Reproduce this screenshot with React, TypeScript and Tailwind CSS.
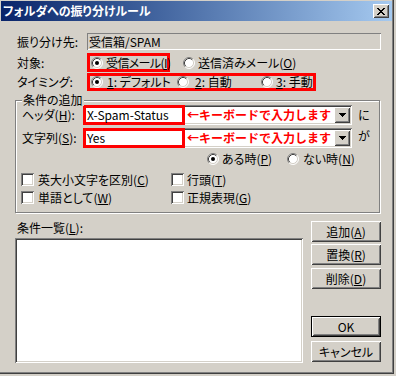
import type { ReactNode } from 'react';

const sunken =
  'shadow-[inset_1px_1px_#808080,inset_-1px_-1px_#fff,inset_2px_2px_#404040,inset_-2px_-2px_#d4d0c8]';
const raised =
  'shadow-[inset_1px_1px_#fff,inset_-1px_-1px_#404040,inset_2px_2px_#d4d0c8,inset_-2px_-2px_#808080]';

function U({ children }: { children: ReactNode }) {
  return <span className="underline underline-offset-1">{children}</span>;
}

function Radio({ on }: { on?: boolean }) {
  return (
    <svg width="12" height="12" viewBox="0 0 12 12" className="shrink-0">
      <circle cx="6" cy="6" r="5" fill="#fff" />
      <path d="M2.11 9.89A5.5 5.5 0 0 1 9.89 2.11" fill="none" stroke="#808080" />
      <path d="M9.89 2.11A5.5 5.5 0 0 1 2.11 9.89" fill="none" stroke="#fff" />
      <path d="M2.82 9.18A4.5 4.5 0 0 1 9.18 2.82" fill="none" stroke="#404040" />
      <path d="M9.18 2.82A4.5 4.5 0 0 1 2.82 9.18" fill="none" stroke="#d4d0c8" />
      {on && <circle cx="6" cy="6" r="2" fill="#000" />}
    </svg>
  );
}

function Check() {
  return <div className={`h-[13px] w-[13px] shrink-0 bg-white ${sunken}`} />;
}

function DropBtn() {
  return (
    <div className={`mr-[2px] flex h-[16px] w-[16px] shrink-0 items-center justify-center bg-[#d4d0c8] ${raised}`}>
      <svg width="7" height="4" viewBox="0 0 7 4" shapeRendering="crispEdges">
        <path d="M0 0h7v1H0zM1 1h5v1H1zM2 2h3v1H2zM3 3h1v1H3z" fill="#000" />
      </svg>
    </div>
  );
}

function Btn({ children, def, className = '' }: { children: ReactNode; def?: boolean; className?: string }) {
  return (
    <div
      className={`flex h-[21px] w-[70px] items-center justify-center bg-[#d4d0c8] ${
        def ? 'border border-black' : ''
      } ${raised} ${className}`}
    >
      {children}
    </div>
  );
}

export default function App() {
  return (
    <div className="h-[376px] w-[396px] bg-[#d4d0c8] font-['Noto_Sans_CJK_JP',sans-serif] text-[12px] leading-[14px] text-black [font-feature-settings:'palt']">
      <div className="h-[374px] w-[394px] pl-px pt-px shadow-[inset_-1px_-1px_#404040,inset_-2px_-2px_#808080]">
        {/* title bar */}
        <div className="flex h-[20px] w-[391px] items-center justify-between bg-linear-to-r from-[#0a246a] to-[#a6caf0] pl-[2px] pr-[3px]">
          <span className="font-bold text-white">フォルダへの振り分けルール</span>
          <div className={`flex h-[14px] w-[16px] items-center justify-center bg-[#d4d0c8] ${raised}`}>
            <svg width="8" height="7" viewBox="0 0 8 7" shapeRendering="crispEdges">
              <path
                d="M0 0h2v1H0zM6 0h2v1H6zM1 1h2v1H1zM5 1h2v1H5zM2 2h4v1H2zM3 3h2v1H3zM2 4h4v1H2zM1 5h2v1H1zM5 5h2v1H5zM0 6h2v1H0zM6 6h2v1H6z"
                fill="#000"
              />
            </svg>
          </div>
        </div>

        {/* destination */}
        <div className="mt-[12px] flex h-[17px] items-center">
          <span className="ml-[16px] w-[70px]">振り分け先:</span>
          <div className="flex h-[17px] w-[294px] items-center pl-[2px] shadow-[inset_1px_1px_#808080,inset_-1px_-1px_#fff]">
            受信箱/SPAM
          </div>
        </div>

        {/* target */}
        <div className="mt-[3px] flex h-[19px] items-center">
          <span className="ml-[16px] w-[70px]">対象:</span>
          <div className="flex h-[19px] w-[83px] items-center whitespace-nowrap border-[3px] border-[#ff0000] pl-px">
            <Radio on />
            <span className="ml-[3px] tracking-[-0.6px]">
              受信メール(<U>I</U>)
            </span>
          </div>
          <div className="ml-[13px]">
            <Radio />
          </div>
          <span className="ml-[3px]">
            送信済みメール(<U>O</U>)
          </span>
        </div>

        {/* timing */}
        <div className="mt-px flex h-[18px] items-center">
          <span className="ml-[16px] w-[70px]">タイミング:</span>
          <div className="flex h-[18px] w-[229px] items-center whitespace-nowrap border-[3px] border-[#ff0000] pl-px">
            <div className="flex w-[86px] items-center">
              <Radio on />
              <span className="ml-[4px]">
                <U>1</U>: デフォルト
              </span>
            </div>
            <div className="flex w-[84px] items-center">
              <Radio />
              <span className="ml-[6px]">
                <U>2</U>: 自動
              </span>
            </div>
            <div className="flex items-center">
              <Radio />
              <span className="ml-[3px]">
                <U>3</U>: 手動
              </span>
            </div>
          </div>
        </div>

        {/* condition group */}
        <div className="relative ml-[14px] mt-[9px] h-[113px] w-[365px] border border-[#808080] shadow-[inset_1px_1px_#fff,1px_1px_#fff]">
          <span className="absolute -top-[7px] left-[6px] bg-[#d4d0c8] px-px leading-[12px]">条件の追加</span>

          <div className="mt-[4px] flex h-[20px] items-center">
            <span className="ml-[6px] w-[61px] leading-[12px]">
              ヘッダ(<U>H</U>):
            </span>
            <div className={`flex h-[20px] w-[269px] items-center bg-white ${sunken}`}>
              <div className="flex h-[20px] w-[102px] shrink-0 items-center border-[3px] border-[#ff0000] bg-white pl-px [font-feature-settings:normal]">
                X-Spam-Status
              </div>
              <span className="ml-[2px] flex-1 whitespace-nowrap font-bold text-[#ff0000] [font-feature-settings:normal]">
                ←キーボードで入力します
              </span>
              <DropBtn />
            </div>
            <span className="ml-[6px]">に</span>
          </div>

          <div className="mt-[3px] flex h-[20px] items-center">
            <span className="ml-[6px] w-[61px]">
              文字列(<U>S</U>):
            </span>
            <div className={`flex h-[20px] w-[269px] items-center bg-white ${sunken}`}>
              <div className="flex h-[20px] w-[102px] shrink-0 items-center border-[3px] border-[#ff0000] bg-white pl-px [font-feature-settings:normal]">
                Yes
              </div>
              <span className="ml-[2px] flex-1 whitespace-nowrap font-bold text-[#ff0000] [font-feature-settings:normal]">
                ←キーボードで入力します
              </span>
              <DropBtn />
            </div>
            <span className="-mt-[5px] ml-[6px]">が</span>
          </div>

          <div className="mt-[5px] flex h-[12px] items-center">
            <div className="ml-[191px] flex w-[80px] items-center">
              <Radio on />
              <span className="ml-[3px]">
                ある時(<U>P</U>)
              </span>
            </div>
            <div className="flex items-center">
              <Radio />
              <span className="ml-[4px]">
                ない時(<U>N</U>)
              </span>
            </div>
          </div>

          <div className="mt-[8px] flex h-[13px] items-center">
            <div className="ml-[5px] flex w-[150px] items-center">
              <Check />
              <span className="ml-[4px]">
                英大小文字を区別(<U>C</U>)
              </span>
            </div>
            <div className="flex items-center">
              <Check />
              <span className="ml-[3px]">
                行頭(<U>T</U>)
              </span>
            </div>
          </div>

          <div className="mt-[5px] flex h-[13px] items-center">
            <div className="ml-[5px] flex w-[150px] items-center">
              <Check />
              <span className="ml-[4px]">
                単語として(<U>W</U>)
              </span>
            </div>
            <div className="flex items-center">
              <Check />
              <span className="ml-[3px]">
                正規表現(<U>G</U>)
              </span>
            </div>
          </div>
        </div>

        {/* list + buttons */}
        <div className="ml-[14px] mt-[8px] flex">
          <div className="w-[288px]">
            <div className="h-[14px] pl-[2px]">
              条件一覧(<U>L</U>):
            </div>
            <div className={`mt-[3px] h-[125px] w-[288px] bg-white ${sunken}`} />
          </div>
          <div className="ml-[8px] flex w-[70px] flex-col">
            <Btn>
              追加(<U>A</U>)
            </Btn>
            <Btn className="mt-[2px]">
              置換(<U>R</U>)
            </Btn>
            <Btn className="mt-[3px]">
              削除(<U>D</U>)
            </Btn>
            <Btn def className="mt-[27px]">
              OK
            </Btn>
            <Btn className="mt-[4px]">キャンセル</Btn>
          </div>
        </div>
      </div>
    </div>
  );
}
